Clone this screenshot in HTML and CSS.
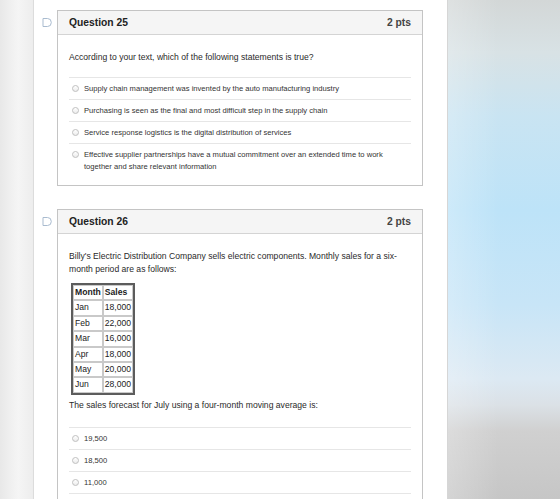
FILE: index.html
```html
<!DOCTYPE html>
<html lang="en">
<head>
    <meta charset="UTF-8">
    <meta name="viewport" content="width=device-width, initial-scale=1.0">
    <title>Quiz</title>
    <link rel="stylesheet" href="styles.css">
</head>
<body>
    <div class="side-strip"></div>
    <div class="quiz-main">
        <div class="question-wrap">
            <svg class="flag" width="10" height="9" viewBox="0 0 10 9">
                <path d="M1 0.5 H5.5 Q9.3 0.5 9.3 4.5 Q9.3 8.5 5.5 8.5 H1 Z" fill="none" stroke="#a9bbcf" stroke-width="1"/>
            </svg>
            <div class="question">
                <div class="question-header">
                    <span class="question-name">Question 25</span>
                    <span class="points">2 pts</span>
                </div>
                <div class="question-body">
                    <p class="question-text">According to your text, which of the following statements is true?</p>
                    <div class="answers">
                        <label class="answer"><span class="radio"></span><span>Supply chain management was invented by the auto manufacturing industry</span></label>
                        <label class="answer"><span class="radio"></span><span>Purchasing is seen as the final and most difficult step in the supply chain</span></label>
                        <label class="answer"><span class="radio"></span><span>Service response logistics is the digital distribution of services</span></label>
                        <label class="answer"><span class="radio"></span><span>Effective supplier partnerships have a mutual commitment over an extended time to work together and share relevant information</span></label>
                    </div>
                </div>
            </div>
        </div>

        <div class="question-wrap">
            <svg class="flag" width="10" height="9" viewBox="0 0 10 9">
                <path d="M1 0.5 H5.5 Q9.3 0.5 9.3 4.5 Q9.3 8.5 5.5 8.5 H1 Z" fill="none" stroke="#a9bbcf" stroke-width="1"/>
            </svg>
            <div class="question">
                <div class="question-header">
                    <span class="question-name">Question 26</span>
                    <span class="points">2 pts</span>
                </div>
                <div class="question-body">
                    <p class="question-text intro">Billy's Electric Distribution Company sells electric components. Monthly sales for a six-month period are as follows:</p>
                    <table class="sales">
                        <tr><th>Month</th><th>Sales</th></tr>
                        <tr><td>Jan</td><td>18,000</td></tr>
                        <tr><td>Feb</td><td>22,000</td></tr>
                        <tr><td>Mar</td><td>16,000</td></tr>
                        <tr><td>Apr</td><td>18,000</td></tr>
                        <tr><td>May</td><td>20,000</td></tr>
                        <tr><td>Jun</td><td>28,000</td></tr>
                    </table>
                    <p class="question-text after-table">The sales forecast for July using a four-month moving average is:</p>
                    <div class="answers continued">
                        <label class="answer"><span class="radio"></span><span>19,500</span></label>
                        <label class="answer"><span class="radio"></span><span>18,500</span></label>
                        <label class="answer"><span class="radio"></span><span>11,000</span></label>
                    </div>
                </div>
            </div>
        </div>
    </div>
    <div class="backdrop"></div>
</body>
</html>
```

FILE: styles.css
```css
html, body {
    margin: 0;
    height: 499px;
    overflow: hidden;
}
body {
    font-family: "Liberation Sans", Arial, sans-serif;
    color: #333;
    display: grid;
    grid-template-columns: 34px 414px 1fr;
}
.side-strip {
    background: linear-gradient(to right, #e8e8e8, #f5f5f5 55%, #ededed);
    border-right: 1px solid #dcdcdc;
}
.quiz-main {
    background: white;
    padding: 10px 24px 0 8px;
    border-right: 1px solid #d6d6d6;
}
.backdrop {
    background:
        linear-gradient(to right, rgba(255, 255, 255, 0.25), rgba(255, 255, 255, 0) 45%),
        linear-gradient(to bottom, #d3d7d7 0%, #d8e2e5 10%, #c9e4f2 22%, #bde3f8 40%, #c8e5f7 58%, #dce9f3 72%, #dbe1e6 77%, #d0d0d0 82%, #c2c2c2 100%);
}

/* question card */
.question-wrap {
    display: flex;
    align-items: flex-start;
    gap: 5px;
    margin-bottom: 23px;
}
.flag {
    margin-top: 8px;
    flex: none;
}
.question {
    flex: 1;
    border: 1px solid #c4c4c4;
    background: white;
}
.question-header {
    display: flex;
    justify-content: space-between;
    align-items: center;
    height: 23px;
    padding: 0 11px;
    background: #f5f5f5;
    border-bottom: 1px solid #d4d4d4;
    font-weight: bold;
    font-size: 10.3px;
}
.question-name {
    color: #222;
}
.points {
    color: #444;
}
.question-body {
    padding: 16px 11px 8px;
}
.question-text {
    margin: 0 0 13px;
    font-size: 8.6px;
    line-height: 13px;
    color: #2a2a2a;
}
.question-text.intro {
    margin-bottom: 7px;
}

/* answers */
.answer {
    display: flex;
    align-items: flex-start;
    gap: 5px;
    padding: 5px 3px 4px;
    border-top: 1px solid #e6e6e6;
    font-size: 7.6px;
    line-height: 12px;
    color: #333;
}
.answers.continued .answer:last-child {
    border-bottom: 1px solid #e6e6e6;
}
.radio {
    flex: none;
    width: 7px;
    height: 7px;
    margin-top: 2px;
    border: 1px solid #c0c0c0;
    border-radius: 50%;
    background: linear-gradient(#ffffff, #ececec);
    box-sizing: border-box;
}

/* sales table */
.sales {
    margin: 0 0 4px 2px;
    border: 2px solid #5c5c5c;
    border-spacing: 0;
    font-size: 8.6px;
    line-height: 13.4px;
    color: #222;
}
.sales th,
.sales td {
    border: 1px solid #c9c9c9;
    padding: 0 1px;
    text-align: left;
}
.sales th {
    font-weight: bold;
}
.after-table {
    margin-bottom: 15px;
}
```
